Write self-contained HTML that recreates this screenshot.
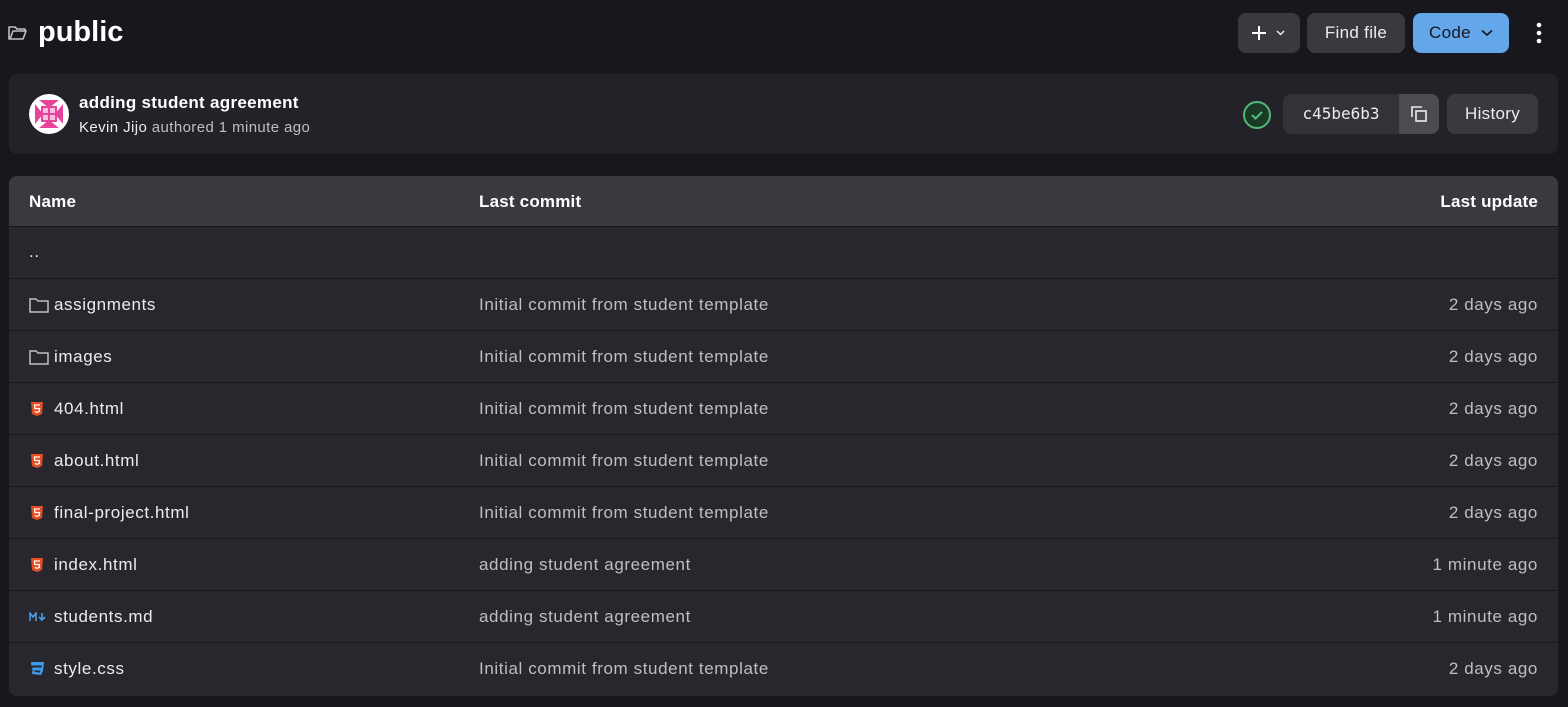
<!DOCTYPE html>
<html><head><style>
body{margin:0;background:#18171d;font-family:"Liberation Sans",sans-serif;color:#ececef;width:1568px;height:707px;overflow:hidden;position:relative}
.abs{position:absolute}
.btn{position:absolute;top:13px;height:40px;border-radius:8px;background:#3a393f;color:#ececef;font-size:17px;letter-spacing:.3px;display:flex;align-items:center;justify-content:center;box-sizing:border-box}
.card{position:absolute;left:9px;top:74px;width:1549px;height:80px;background:#232228;border-radius:8px}
.table{position:absolute;left:9px;top:176px;width:1549px;height:520px;background:#28272d;border-radius:8px;overflow:hidden}
.row{position:absolute;left:0;width:1549px;height:52px;border-top:1px solid #18171d;box-sizing:border-box;font-size:17px;letter-spacing:.6px}
.row span{position:absolute;top:16px}
.c1{left:45px;color:#ececef}.c2{left:470px;color:#bfbfc3}.c3{right:20px;color:#bfbfc3}
.ic{position:absolute;left:20px;top:18px}
</style></head><body>
<svg class="abs" style="left:8px;top:25px" width="20" height="16" viewBox="0 0 20 16"><path d="M1 2h6l2 2h8v2H5L2 14H1z M1 14h14l3-8H5" fill="none" stroke="#bfbfc3" stroke-width="1.6" stroke-linejoin="round"/></svg>
<div class="abs" style="left:38px;top:16px;font-size:29px;font-weight:bold;color:#fff">public</div>
<div class="btn" style="left:1238px;width:62px">
<svg width="36" height="16" viewBox="0 0 36 16"><path d="M8 1v14M1 8h14" stroke="#fff" stroke-width="2"/><path d="M26 6l3.5 3.5L33 6" fill="none" stroke="#ececef" stroke-width="1.5"/></svg></div>
<div class="btn" style="left:1307px;width:98px">Find file</div>
<div class="btn" style="left:1413px;width:96px;background:#63a6e9;color:#18171d">Code&nbsp;&nbsp;<svg width="12" height="8" viewBox="0 0 12 8"><path d="M1 1.5l5 4.5 5-4.5" fill="none" stroke="#18171d" stroke-width="1.6"/></svg></div>
<svg class="abs" style="left:1535px;top:22px" width="8" height="24"><circle cx="4" cy="3" r="2.3" fill="#fff"/><circle cx="4" cy="11" r="2.3" fill="#fff"/><circle cx="4" cy="19" r="2.3" fill="#fff"/></svg>
<div class="card">
<svg class="abs" style="left:20px;top:20px" width="40" height="40" viewBox="0 0 40 40"><circle cx="20" cy="20" r="20" fill="#fff"/><g fill="#e8439b"><path d="M10 6h20l-10 8z"/><path d="M10 34h20l-10-8z"/><path d="M6 10v20l8-10z"/><path d="M34 10v20l-8-10z"/></g><rect x="12" y="12" width="16" height="16" fill="#e8439b"/><g fill="#f8c0dc"><rect x="14" y="14" width="5" height="5"/><rect x="21" y="14" width="5" height="5"/><rect x="14" y="21" width="5" height="5"/><rect x="21" y="21" width="5" height="5"/></g></svg>
<div class="abs" style="left:79px;top:19px;font-size:17px;font-weight:bold;color:#fff;letter-spacing:.3px;left:70px">adding student agreement</div>
<div class="abs" style="left:70px;top:45px;font-size:15px;color:#bfbfc3;letter-spacing:.4px"><span style="color:#ececef">Kevin Jijo</span> authored 1 minute ago</div>
<svg class="abs" style="left:1233px;top:26px" width="30" height="30" viewBox="0 0 30 30"><circle cx="15" cy="15" r="13" fill="#1a3a26" stroke="#52b87a" stroke-width="2"/><path d="M10 15l3.5 3.5L20 12" fill="none" stroke="#52b87a" stroke-width="2.2"/></svg>
<div class="abs" style="left:1274px;top:20px;width:116px;height:40px;background:#333238;border-radius:8px 0 0 8px;font-family:'DejaVu Sans Mono',monospace;font-size:16px;line-height:40px;text-align:center;color:#ececef">c45be6b3</div>
<div class="abs" style="left:1390px;top:20px;width:40px;height:40px;background:#4c4b51;border-radius:0 8px 8px 0"><svg style="margin:11px" width="18" height="18" viewBox="0 0 18 18"><path d="M2 12V2h10" fill="none" stroke="#ececef" stroke-width="1.6"/><rect x="6" y="6" width="10" height="10" fill="none" stroke="#ececef" stroke-width="1.6"/></svg></div>
<div class="abs" style="left:1438px;top:20px;width:91px;height:40px;background:#3a393f;border-radius:8px;font-size:17px;line-height:40px;text-align:center;letter-spacing:.3px">History</div>
</div>
<div class="table">
<div class="row" style="top:0;height:50px;background:#3a393f;border:none;font-weight:bold;letter-spacing:.2px"><span class="c1" style="left:20px;top:16px;color:#fff">Name</span><span class="c2" style="color:#fff">Last commit</span><span class="c3" style="color:#fff">Last update</span></div>
<div class="row" style="top:50px"><span class="c1" style="left:20px;top:15px">..</span></div>
<div class="row" style="top:102px"><svg class="ic" width="20" height="16"><path d="M1 2h6l2 2h10v11H1z" fill="none" stroke="#bfbfc3" stroke-width="1.5"/></svg><span class="c1">assignments</span><span class="c2">Initial commit from student template</span><span class="c3">2 days ago</span></div>
<div class="row" style="top:154px"><svg class="ic" width="20" height="16"><path d="M1 2h6l2 2h10v11H1z" fill="none" stroke="#bfbfc3" stroke-width="1.5"/></svg><span class="c1">images</span><span class="c2">Initial commit from student template</span><span class="c3">2 days ago</span></div>
<div class="row" style="top:206px"><svg class="ic" width="16" height="16" viewBox="0 0 16 16"><path d="M2 1h12l-1 12-5 2-5-2z" fill="#e44d26"/><path d="M11 4H5.5l.3 3.5H10.5l-.3 3L8 11.3 5.8 10.6" fill="none" stroke="#fff" stroke-width="1.3"/></svg><span class="c1">404.html</span><span class="c2">Initial commit from student template</span><span class="c3">2 days ago</span></div>
<div class="row" style="top:258px"><svg class="ic" width="16" height="16" viewBox="0 0 16 16"><path d="M2 1h12l-1 12-5 2-5-2z" fill="#e44d26"/><path d="M11 4H5.5l.3 3.5H10.5l-.3 3L8 11.3 5.8 10.6" fill="none" stroke="#fff" stroke-width="1.3"/></svg><span class="c1">about.html</span><span class="c2">Initial commit from student template</span><span class="c3">2 days ago</span></div>
<div class="row" style="top:310px"><svg class="ic" width="16" height="16" viewBox="0 0 16 16"><path d="M2 1h12l-1 12-5 2-5-2z" fill="#e44d26"/><path d="M11 4H5.5l.3 3.5H10.5l-.3 3L8 11.3 5.8 10.6" fill="none" stroke="#fff" stroke-width="1.3"/></svg><span class="c1">final-project.html</span><span class="c2">Initial commit from student template</span><span class="c3">2 days ago</span></div>
<div class="row" style="top:362px"><svg class="ic" width="16" height="16" viewBox="0 0 16 16"><path d="M2 1h12l-1 12-5 2-5-2z" fill="#e44d26"/><path d="M11 4H5.5l.3 3.5H10.5l-.3 3L8 11.3 5.8 10.6" fill="none" stroke="#fff" stroke-width="1.3"/></svg><span class="c1">index.html</span><span class="c2">adding student agreement</span><span class="c3">1 minute ago</span></div>
<div class="row" style="top:414px"><svg class="ic" style="top:21px" width="18" height="10" viewBox="0 0 18 10"><path d="M1 9V1l3 4 3-4v8M13 1v7M10 5l3 3 3-3" fill="none" stroke="#4a9be8" stroke-width="1.6"/></svg><span class="c1">students.md</span><span class="c2">adding student agreement</span><span class="c3">1 minute ago</span></div>
<div class="row" style="top:466px"><svg class="ic" width="16" height="16" viewBox="0 0 16 16"><path d="M2 1h13l-1 9-2 4-9-1 .5-3H6l-.2 1 5 .5.6-2H3l.5-3h9l.3-2H2.3z" fill="#3b9be8"/></svg><span class="c1">style.css</span><span class="c2">Initial commit from student template</span><span class="c3">2 days ago</span></div>
</div>
</body></html>
